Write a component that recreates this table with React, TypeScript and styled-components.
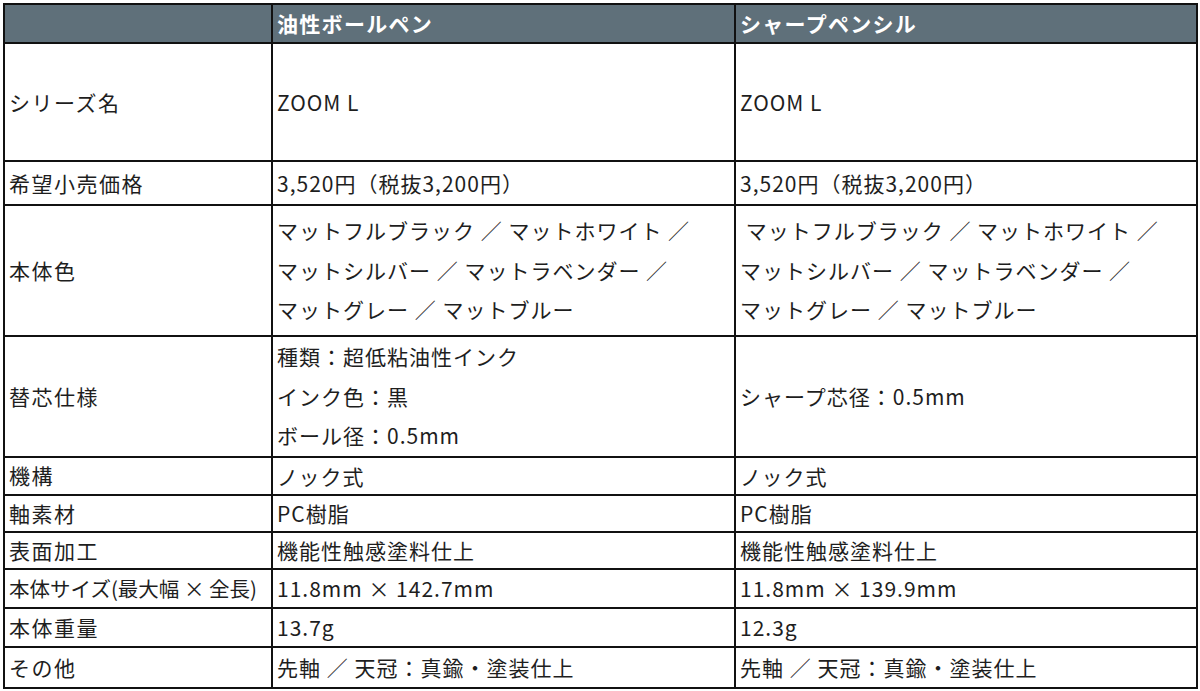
import React, { FC } from "react";
import styled, { createGlobalStyle } from "styled-components";

type SpecRow = {
  label: string;
  height: number;
  pen: string[];
  pencil: string[];
};

const rows: SpecRow[] = [
  { label: "シリーズ名", height: 118, pen: ["ZOOM L"], pencil: ["ZOOM L"] },
  {
    label: "希望小売価格",
    height: 44,
    pen: ["3,520円（税抜3,200円）"],
    pencil: ["3,520円（税抜3,200円）"],
  },
  {
    label: "本体色",
    height: 131,
    pen: [
      "マットフルブラック ／ マットホワイト ／",
      "マットシルバー ／ マットラベンダー ／",
      "マットグレー ／ マットブルー",
    ],
    pencil: [
      " マットフルブラック ／ マットホワイト ／",
      "マットシルバー ／ マットラベンダー ／",
      "マットグレー ／ マットブルー",
    ],
  },
  {
    label: "替芯仕様",
    height: 119,
    pen: ["種類：超低粘油性インク", "インク色：黒", "ボール径：0.5mm"],
    pencil: ["シャープ芯径：0.5mm"],
  },
  { label: "機構", height: 38, pen: ["ノック式"], pencil: ["ノック式"] },
  { label: "軸素材", height: 37, pen: ["PC樹脂"], pencil: ["PC樹脂"] },
  {
    label: "表面加工",
    height: 37,
    pen: ["機能性触感塗料仕上"],
    pencil: ["機能性触感塗料仕上"],
  },
  {
    label: "本体サイズ(最大幅 × 全長)",
    height: 39,
    pen: ["11.8mm × 142.7mm"],
    pencil: ["11.8mm × 139.9mm"],
  },
  { label: "本体重量", height: 39, pen: ["13.7g"], pencil: ["12.3g"] },
  {
    label: "その他",
    height: 41,
    pen: ["先軸 ／ 天冠：真鍮・塗装仕上"],
    pencil: ["先軸 ／ 天冠：真鍮・塗装仕上"],
  },
];

const App: FC = () => {
  return (
    <>
      <GlobalStyle />
      <Page>
        <Table>
          <colgroup>
            <col style={{ width: 268 }} />
            <col style={{ width: 463 }} />
            <col style={{ width: 462 }} />
          </colgroup>
          <thead>
            <HeadRow>
              <HeadCell />
              <HeadCell>油性ボールペン</HeadCell>
              <HeadCell>シャープペンシル</HeadCell>
            </HeadRow>
          </thead>
          <tbody>
            {rows.map(row => (
              <Row key={row.label} $height={row.height}>
                <LabelCell $small={row.label.length > 10}>{row.label}</LabelCell>
                <Cell>
                  {row.pen.map(line => (
                    <Line key={line} $multi={row.pen.length > 1}>
                      {line}
                    </Line>
                  ))}
                </Cell>
                <Cell>
                  {row.pencil.map(line => (
                    <Line key={line} $multi={row.pencil.length > 1}>
                      {line}
                    </Line>
                  ))}
                </Cell>
              </Row>
            ))}
          </tbody>
        </Table>
      </Page>
    </>
  );
};

export default App;

const GlobalStyle = createGlobalStyle`
  html, body {
    margin: 0;
    padding: 0;
    background: #fff;
  }
  body {
    font-family: "Noto Sans CJK JP", "Noto Sans", sans-serif;
    color: #1e1e1e;
  }
`;

const Page = styled.div`
  width: 1200px;
  height: 691px;
  padding: 3px 0 0 3px;
  box-sizing: border-box;
  overflow: hidden;
`;

const Table = styled.table`
  border-collapse: collapse;
  table-layout: fixed;
  width: 1193px;
`;

const HeadRow = styled.tr`
  height: 39px;
  background: #5f707a;
`;

const HeadCell = styled.th`
  border: 2px solid #111;
  padding: 0 4px;
  text-align: left;
  vertical-align: middle;
  color: #fff;
  font-size: 21px;
  font-weight: 700;
  letter-spacing: 1.3px;
  line-height: 1;
`;

const Row = styled.tr<{ $height: number }>`
  height: ${p => p.$height}px;
`;

const LabelCell = styled.td<{ $small?: boolean }>`
  border: 2px solid #111;
  padding: 0 2px 0 4px;
  vertical-align: middle;
  font-size: ${p => (p.$small ? "20.5px" : "21px")};
  letter-spacing: ${p => (p.$small ? "0" : "1.5px")};
  white-space: nowrap;
  overflow: hidden;
  line-height: 1;
`;

const Cell = styled.td`
  border: 2px solid #111;
  padding: 0 4px;
  vertical-align: middle;
  font-size: 21px;
  letter-spacing: 1px;
`;

const Line = styled.div<{ $multi?: boolean }>`
  line-height: ${p => (p.$multi ? "39.5px" : "26px")};
  white-space: pre;
`;
